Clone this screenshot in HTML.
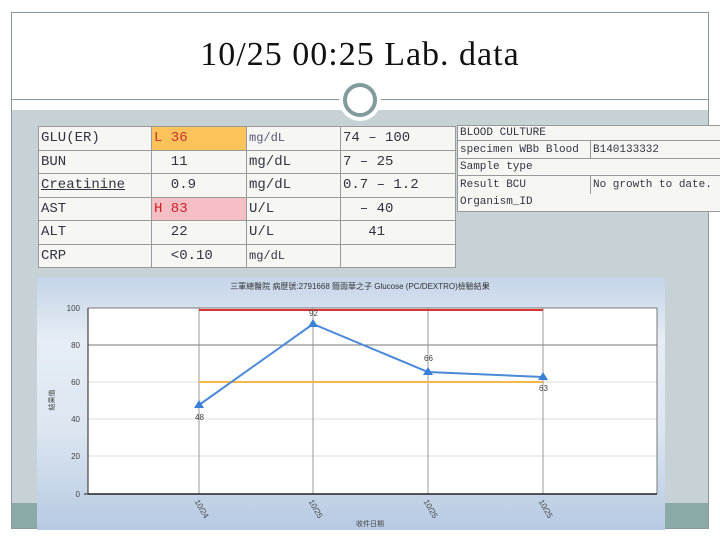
<!DOCTYPE html>
<html><head><meta charset="utf-8"><style>
*{margin:0;padding:0;box-sizing:border-box}
body{width:720px;height:540px;background:#fff;position:relative;overflow:hidden;font-family:"Liberation Sans",sans-serif}
.abs{position:absolute}
.frame{left:11px;top:12px;width:698px;height:517px;border:1px solid #8a9a9c}
.title{left:0;width:720px;top:36px;text-align:center;font-family:"Liberation Serif",serif;font-size:34px;letter-spacing:1px;color:#111}
.mono{font-family:"Liberation Mono",monospace;color:#334;font-size:14px}
table{border-collapse:collapse;position:absolute}
td{border:1px solid #999;background:#f6f6f3;padding:0 2px;white-space:nowrap}
</style></head><body>
<div class="abs frame"></div>
<div class="abs title">10/25 00:25 Lab. data</div>
<div class="abs" style="left:11px;top:99px;width:698px;height:1px;background:#8a9a9c"></div>
<div class="abs" style="left:12px;top:110px;width:696px;height:393px;background:#c7d2d6"></div>
<div class="abs" style="left:12px;top:503px;width:696px;height:25px;background:#8aaaa8"></div>
<div class="abs" style="left:339px;top:79px;width:42px;height:42px;border-radius:50%;background:#fff"></div>
<div class="abs" style="left:343px;top:83px;width:34px;height:34px;border-radius:50%;border:4px solid #829b9c"></div>

<table class="mono" style="left:38px;top:126px;width:418px;height:142px">
<tr><td style="width:113px">GLU(ER)</td><td style="width:95px;background:#fbc35a;color:#c33">L 36</td><td style="width:94px;font-size:12px;color:#557">mg/dL</td><td>74 – 100</td></tr>
<tr><td>BUN</td><td>&nbsp;&nbsp;11</td><td>mg/dL</td><td>7 – 25</td></tr>
<tr><td><u>Creatinine</u></td><td>&nbsp;&nbsp;0.9</td><td>mg/dL</td><td>0.7 – 1.2</td></tr>
<tr><td>AST</td><td style="background:#f6bfc6;color:#c22">H 83</td><td>U/L</td><td>&nbsp;&nbsp;– 40</td></tr>
<tr><td>ALT</td><td>&nbsp;&nbsp;22</td><td>U/L</td><td>&nbsp;&nbsp;&nbsp;41</td></tr>
<tr><td>CRP</td><td>&nbsp;&nbsp;&lt;0.10</td><td style="font-size:12px">mg/dL</td><td></td></tr>
</table>

<table class="mono" style="left:457px;top:125px;width:270px;height:87px;font-size:11px">
<tr><td colspan="2" style="height:15px">BLOOD CULTURE</td></tr>
<tr><td style="width:133px;height:18px">specimen WBb Blood</td><td>B140133332</td></tr>
<tr><td colspan="2" style="height:17px">Sample type</td></tr>
<tr><td style="border-bottom:none;height:18px">Result BCU</td><td style="border-bottom:none">No growth to date.</td></tr>
<tr><td style="border-top:none;border-right:none">Organism_ID</td><td style="border-top:none;border-left:none"></td></tr>
</table>

<svg class="abs" style="left:37px;top:277px" width="628" height="253" viewBox="37 277 628 253">
<defs><linearGradient id="g" x1="0" y1="0" x2="0" y2="1"><stop offset="0" stop-color="#c4d4e8"/><stop offset="0.25" stop-color="#e6edf5"/><stop offset="0.6" stop-color="#dce6f1"/><stop offset="1" stop-color="#b7cae2"/></linearGradient></defs>
<rect x="37" y="277" width="628" height="253" fill="url(#g)"/>
<text x="360" y="289" font-size="8" fill="#333" text-anchor="middle" font-family="Liberation Sans,Noto Sans CJK TC,sans-serif">三軍總醫院 病歷號:2791668 簡雨華之子 Glucose (PC/DEXTRO)檢驗結果</text>
<rect x="88" y="308" width="569" height="186" fill="#fff"/>
<g stroke="#ddd" stroke-width="1"><line x1="88" y1="382" x2="657" y2="382"/><line x1="88" y1="419" x2="657" y2="419"/><line x1="88" y1="456" x2="657" y2="456"/></g>
<line x1="88" y1="345" x2="657" y2="345" stroke="#777"/>
<g stroke="#999"><line x1="199" y1="308" x2="199" y2="494"/><line x1="313" y1="308" x2="313" y2="494"/><line x1="428" y1="308" x2="428" y2="494"/><line x1="543" y1="308" x2="543" y2="494"/></g>
<line x1="88" y1="308" x2="657" y2="308" stroke="#777"/>
<line x1="657" y1="308" x2="657" y2="494" stroke="#777"/>
<line x1="88" y1="308" x2="88" y2="494" stroke="#222"/>
<line x1="88" y1="494" x2="657" y2="494" stroke="#222" stroke-width="1.5"/>
<line x1="199" y1="310" x2="543" y2="310" stroke="#d33" stroke-width="2"/>
<line x1="199" y1="382" x2="543" y2="382" stroke="#f2b84b" stroke-width="2"/>
<polyline points="199,405 313,324 428,372 543,377" fill="none" stroke="#4a8ad8" stroke-width="2"/>
<g fill="#3a7fd8"><path d="M199,400 l-5,8 h10z"/><path d="M313,319 l-5,8 h10z"/><path d="M428,367 l-5,8 h10z"/><path d="M543,372 l-5,8 h10z"/></g>
<g font-size="8" fill="#444" font-family="Liberation Sans,sans-serif">
<text x="195" y="420">48</text><text x="309" y="316">92</text><text x="424" y="361">66</text><text x="539" y="391">63</text>
<g text-anchor="end"><text x="80" y="311">100</text><text x="80" y="348">80</text><text x="80" y="385">60</text><text x="80" y="422">40</text><text x="80" y="459">20</text><text x="80" y="497">0</text></g>
<g transform="rotate(60 197 500)"><text x="197" y="503">10/24</text></g>
<g transform="rotate(60 311 500)"><text x="311" y="503">10/25</text></g>
<g transform="rotate(60 426 500)"><text x="426" y="503">10/25</text></g>
<g transform="rotate(60 541 500)"><text x="541" y="503">10/25</text></g>
<text x="370" y="526" text-anchor="middle" font-family="Liberation Sans,Noto Sans CJK TC,sans-serif" font-size="7">收件日期</text>
<text transform="rotate(-90 54 400)" x="54" y="400" text-anchor="middle" font-family="Liberation Sans,Noto Sans CJK TC,sans-serif" font-size="7">結果值</text>
</g>
<g stroke="#222"><line x1="84" y1="494" x2="88" y2="494"/></g>
</svg>
</body></html>
